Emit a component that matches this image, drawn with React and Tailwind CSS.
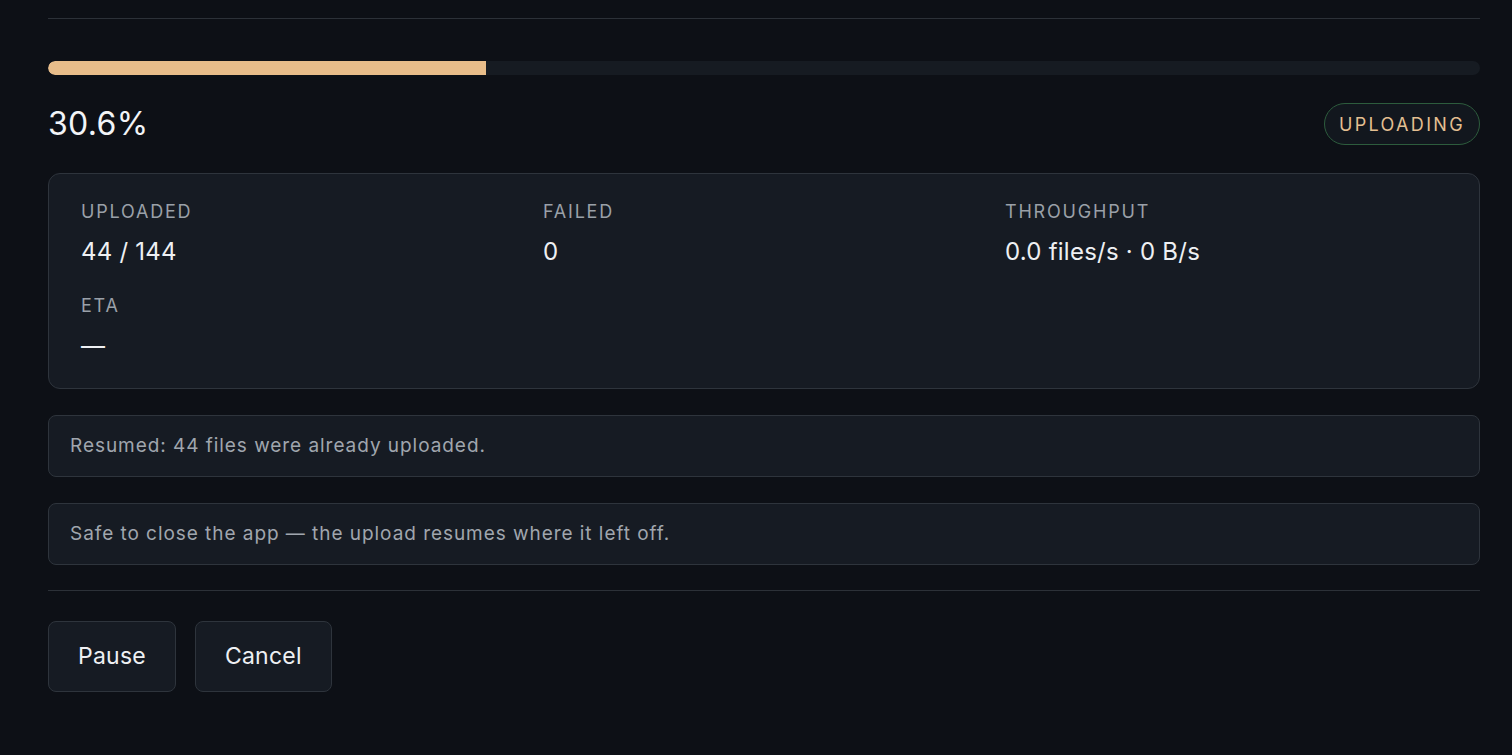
export default function App() {
  const pct = 30.6;
  return (
    <div className="min-h-screen w-full bg-[#0d1016] pl-12 pr-8 pt-[18px] text-white" style={{ fontFamily: "Inter, 'Noto Sans', sans-serif" }}>
      <div className="border-t border-[#2c3138]" />

      {/* progress */}
      <div className="mt-[42px] h-[14px] w-full overflow-hidden rounded-full bg-[#161b22]">
        <div className="h-full rounded-l-full bg-[#e8bd8a]" style={{ width: `${pct}%` }} />
      </div>

      <div className="mt-[28px] flex items-center justify-between">
        <span className="text-[32px] leading-none tracking-[0.01em] text-[#f2f4f7]">{pct}%</span>
        <span className="flex h-[42px] items-center rounded-full border border-[#2d5c3d] bg-[#12171e] px-[14px] text-[18px] tracking-[0.13em] text-[#e3bf91]">
          UPLOADING
        </span>
      </div>

      {/* stats */}
      <div className="mt-[28px] rounded-xl border border-[#2e343c] bg-[#161b23] px-8 py-[26px]">
        <div className="grid grid-cols-3 gap-x-5 gap-y-[26px]">
          <Stat label="UPLOADED" value="44 / 144" />
          <Stat label="FAILED" value="0" />
          <Stat label="THROUGHPUT" value="0.0 files/s · 0 B/s" />
          <Stat label="ETA" value="—" />
        </div>
      </div>

      <Notice>Resumed: 44 files were already uploaded.</Notice>
      <Notice>Safe to close the app — the upload resumes where it left off.</Notice>

      <div className="mt-[25px] border-t border-[#2c3138]" />

      <div className="mt-[30px] flex gap-[19px]">
        <Button>Pause</Button>
        <Button>Cancel</Button>
      </div>
    </div>
  );
}

function Stat({ label, value }) {
  return (
    <div>
      <div className="text-[18px] leading-6 tracking-[0.1em] text-[#9aa0a8]">{label}</div>
      <div className="mt-3 text-[24px] leading-8 tracking-[0.01em] text-[#eef0f3]">{value}</div>
    </div>
  );
}

function Notice({ children }) {
  return (
    <div className="mt-[26px] flex h-[62px] items-center rounded-lg border border-[#2e343c] bg-[#161b23] px-[21px] text-[19px] tracking-[0.05em] text-[#a0a6ae]">
      {children}
    </div>
  );
}

function Button({ children }) {
  return (
    <button className="h-[71px] rounded-lg border border-[#2e343c] bg-[#161b23] px-[29px] text-[23px] tracking-[0.01em] text-[#eef0f3]">
      {children}
    </button>
  );
}
